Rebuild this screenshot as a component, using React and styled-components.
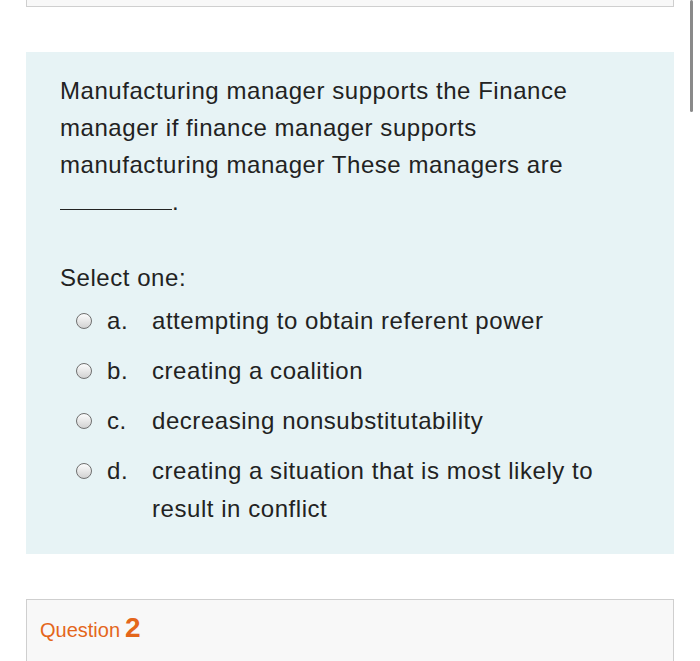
import React from "react";
import styled, { createGlobalStyle } from "styled-components";

const Global = createGlobalStyle`
  body {
    margin: 0;
    background: #ffffff;
    font-family: "Liberation Sans", Arial, sans-serif;
    color: #222222;
  }
`;

const Page = styled("div")`
  display: flex;
  flex-direction: column;
  padding: 0 26px;
`;

const TopCard = styled("div")`
  height: 6px;
  background: #f8f8f8;
  border: 1px solid #cfcfcf;
  border-top: none;
`;

const Panel = styled("div")`
  margin-top: 45px;
  background: #e7f3f5;
  padding: 20px 34px 26px 34px;
`;

const QText = styled("p")`
  margin: 0;
  font-size: 24px;
  letter-spacing: 0.55px;
  line-height: 37px;
  width: 570px;
`;

const Blank = styled("span")`
  display: inline-block;
  width: 112px;
  border-bottom: 1px solid #222;
  height: 22px;
  vertical-align: baseline;
`;

const Prompt = styled("p")`
  margin: 39px 0 0 0;
  font-size: 24px;
  letter-spacing: 0.55px;
  line-height: 37px;
`;

const Options = styled("div")`
  display: flex;
  flex-direction: column;
  gap: 12px;
  margin-top: 6px;
  padding-left: 16px;
`;

const Option = styled("label")`
  display: flex;
  align-items: flex-start;
  font-size: 24px;
  letter-spacing: 0.55px;
  line-height: 38px;
`;

const Radio = styled("span")`
  flex: none;
  width: 16px;
  height: 16px;
  margin-top: 11px;
  border-radius: 50%;
  border: 1px solid #6f6f6f;
  background: linear-gradient(#fdfdfd, #d2d2d2);
  box-sizing: border-box;
`;

const Letter = styled("span")`
  flex: none;
  width: 45px;
  margin-left: 15px;
`;

const Answer = styled("span")`
  width: 460px;
`;

const NextCard = styled("div")`
  margin-top: 45px;
  height: 70px;
  background: #f8f8f8;
  border: 1px solid #cfcfcf;
  border-bottom: none;
  padding: 12px 13px;
  box-sizing: border-box;
`;

const QLabel = styled("span")`
  color: #e4661b;
  font-size: 20px;
`;

const QNum = styled("span")`
  font-size: 28px;
  font-weight: bold;
  margin-left: 5px;
`;

const Scroll = styled("div")`
  position: fixed;
  top: 0;
  right: 7px;
  width: 3px;
  height: 112px;
  border-radius: 2px;
  background: #8a8a8a;
`;

const options = [
  ["a.", "attempting to obtain referent power"],
  ["b.", "creating a coalition"],
  ["c.", "decreasing nonsubstitutability"],
  ["d.", "creating a situation that is most likely to result in conflict"],
];

export default function App() {
  return (
    <>
      <Global />
      <Page>
        <TopCard />
        <Panel>
          <QText>
            Manufacturing manager supports the Finance manager if finance
            manager supports manufacturing manager These managers are{" "}
            <Blank />.
          </QText>
          <Prompt>Select one:</Prompt>
          <Options>
            {options.map(([l, t]) => (
              <Option key={l}>
                <Radio />
                <Letter>{l}</Letter>
                <Answer>{t}</Answer>
              </Option>
            ))}
          </Options>
        </Panel>
        <NextCard>
          <QLabel>
            Question<QNum>2</QNum>
          </QLabel>
        </NextCard>
      </Page>
      <Scroll />
    </>
  );
}
